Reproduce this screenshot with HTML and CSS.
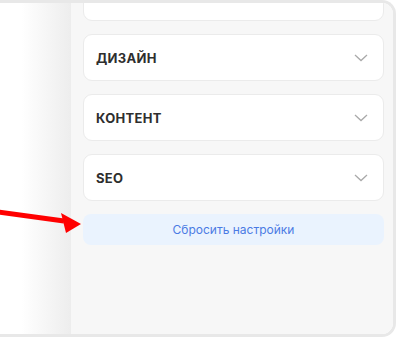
FILE: index.html
```html
<!DOCTYPE html>
<html lang="ru">
<head>
    <meta charset="UTF-8">
    <meta name="viewport" content="width=device-width, initial-scale=1.0">
    <link rel="stylesheet" href="styles.css">
    <title>Настройки</title>
</head>
<body>
    <div class="frame">
        <!-- Page area to the left of the settings panel -->
        <div class="page"></div>

        <!-- Settings panel -->
        <div class="panel">
            <div class="panel-scroll">
                <div class="section section-cut"></div>
                <div class="section">
                    <span class="section-title">ДИЗАЙН</span>
                    <svg class="chevron" width="14" height="8" viewBox="0 0 14 8"><path d="M1 1l6 5.5L13 1" fill="none" stroke="#aaa" stroke-width="1.3"/></svg>
                </div>
                <div class="section">
                    <span class="section-title">КОНТЕНТ</span>
                    <svg class="chevron" width="14" height="8" viewBox="0 0 14 8"><path d="M1 1l6 5.5L13 1" fill="none" stroke="#aaa" stroke-width="1.3"/></svg>
                </div>
                <div class="section">
                    <span class="section-title">SEO</span>
                    <svg class="chevron" width="14" height="8" viewBox="0 0 14 8"><path d="M1 1l6 5.5L13 1" fill="none" stroke="#aaa" stroke-width="1.3"/></svg>
                </div>
                <button class="reset-btn">Сбросить настройки</button>
            </div>
        </div>

        <!-- Red pointer drawn over the screenshot -->
        <svg class="arrow" width="84" height="40" viewBox="0 0 84 40">
            <line x1="-2" y1="14" x2="64" y2="23" stroke="#ff0000" stroke-width="5"/>
            <polygon points="61,15 81,26 66,35" fill="#ff0000"/>
        </svg>
    </div>
</body>
</html>
```

FILE: styles.css
```css
/* Whole window */
body, html {
    margin: 0;
    height: 100%;
    font-family: Inter, "Noto Sans", sans-serif;
    background-color: #ffffff;
}

.frame {
    position: relative;
    box-sizing: border-box;
    width: 396px;
    height: 337px;
    display: flex;
    border: 3px solid #e8e8e8;
    border-left: none;
    border-radius: 0 14px 14px 0;
    overflow: hidden;
}

/* Left page with the shadow falling from the panel */
.page {
    width: 71px;
    flex-shrink: 0;
    background: linear-gradient(to right, #ffffff 30%, #ededed 100%);
}

.arrow {
    position: absolute;
    left: 0;
    top: 195px;
}

/* Panel with the setting sections */
.panel {
    flex: 1;
    background-color: #f7f7f7;
    overflow: hidden;
    padding: 0 9px 0 12px;
}

.panel-scroll {
    display: flex;
    flex-direction: column;
    gap: 13px;
    margin-top: -29px;
}

.section {
    box-sizing: border-box;
    height: 47px;
    display: flex;
    align-items: center;
    justify-content: space-between;
    padding: 0 15px 0 12px;
    background-color: #ffffff;
    border: 1px solid #ebebeb;
    border-radius: 9px;
}

.section-title {
    font-size: 13px;
    font-weight: 700;
    letter-spacing: 0.3px;
    color: #2e2e2e;
}

.chevron {
    display: block;
}

.reset-btn {
    height: 31px;
    border: none;
    border-radius: 8px;
    background-color: #eaf3fe;
    color: #4a7be4;
    font-family: Inter, "Noto Sans", sans-serif;
    font-size: 12px;
    cursor: pointer;
}
```
